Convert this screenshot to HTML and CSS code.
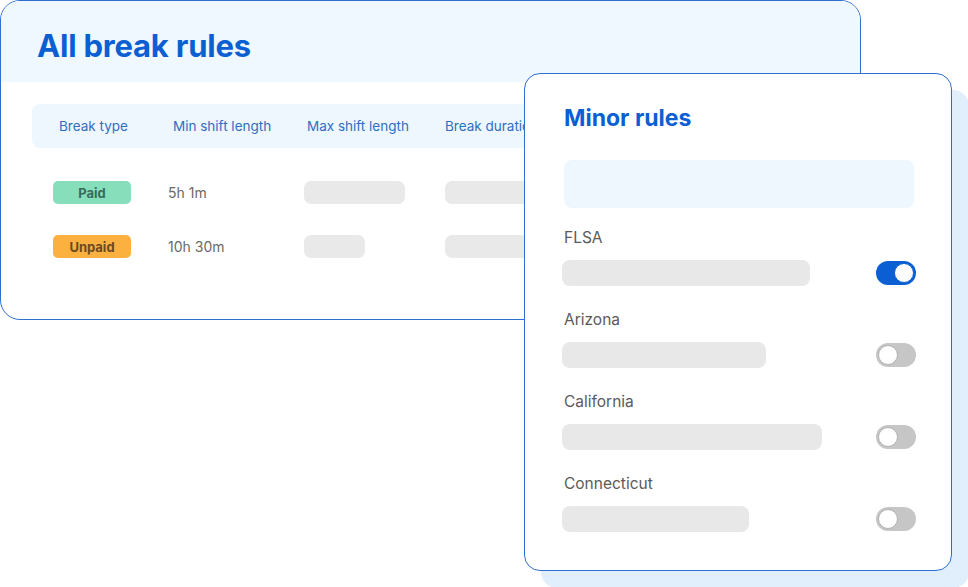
FILE: index.html
```html
<!DOCTYPE html>
<html lang="en">
<head>
<meta charset="utf-8">
<title>Break rules</title>
<link rel="stylesheet" href="styles.css">
</head>
<body>
<div class="stage">
  <section class="rules-card">
    <header class="rules-head">
      <h1 class="rules-title">All break rules</h1>
    </header>
    <div class="table">
      <div class="thead">
        <span>Break type</span>
        <span>Min shift length</span>
        <span>Max shift length</span>
        <span>Break duration</span>
      </div>
      <div class="trow">
        <span class="badge badge-paid">Paid</span>
        <span class="cell-text">5h 1m</span>
        <span class="ph" style="width:101px"></span>
        <span class="ph" style="width:120px"></span>
      </div>
      <div class="trow">
        <span class="badge badge-unpaid">Unpaid</span>
        <span class="cell-text">10h 30m</span>
        <span class="ph" style="width:61px"></span>
        <span class="ph" style="width:120px"></span>
      </div>
    </div>
  </section>

  <section class="minor-card">
    <h2 class="minor-title">Minor rules</h2>
    <div class="search"></div>
    <ul class="rule-list">
      <li class="rule">
        <span class="rule-label">FLSA</span>
        <div class="rule-line">
          <span class="bar" style="width:248px"></span>
          <span class="toggle on"><span class="knob"></span></span>
        </div>
      </li>
      <li class="rule">
        <span class="rule-label">Arizona</span>
        <div class="rule-line">
          <span class="bar" style="width:204px"></span>
          <span class="toggle"><span class="knob"></span></span>
        </div>
      </li>
      <li class="rule">
        <span class="rule-label">California</span>
        <div class="rule-line">
          <span class="bar" style="width:260px"></span>
          <span class="toggle"><span class="knob"></span></span>
        </div>
      </li>
      <li class="rule">
        <span class="rule-label">Connecticut</span>
        <div class="rule-line">
          <span class="bar" style="width:187px"></span>
          <span class="toggle"><span class="knob"></span></span>
        </div>
      </li>
    </ul>
  </section>
</div>
</body>
</html>
```

FILE: styles.css
```css
* { box-sizing: border-box; }
html, body { margin: 0; padding: 0; }
body {
  width: 968px;
  height: 587px;
  overflow: hidden;
  background: #ffffff;
  font-family: Inter, "Noto Sans", sans-serif;
}
.stage {
  position: relative;
  width: 968px;
  height: 587px;
}

/* back card */
.rules-card {
  width: 861px;
  height: 320px;
  border: 1px solid #2e6fcf;
  border-radius: 20px;
  overflow: hidden;
  background: #ffffff;
}
.rules-head {
  height: 81px;
  background: #eff7ff;
  display: flex;
  align-items: center;
  padding: 7px 0 0 36px;
}
.rules-title {
  margin: 0;
  font-size: 31px;
  font-weight: 700;
  color: #0b5fd3;
  letter-spacing: -0.2px;
}
.table {
  margin: 22px 0 0 31px;
}
.thead {
  height: 44px;
  background: #eef6fe;
  border-radius: 8px;
  display: grid;
  grid-template-columns: 114px 134px 138px 1fr;
  align-items: center;
  padding-left: 27px;
  font-size: 13.5px;
  color: #2f6fc2;
  white-space: nowrap;
}
.trow {
  display: grid;
  grid-template-columns: 115px 136px 141px 1fr;
  align-items: center;
  padding-left: 21px;
  height: 23px;
  margin-top: 33px;
}
.trow + .trow { margin-top: 31px; }
.badge {
  width: 78px;
  height: 23px;
  border-radius: 5px;
  display: flex;
  align-items: center;
  justify-content: center;
  font-size: 13px;
  font-weight: 700;
}
.badge-paid { background: #86dfba; color: #3a6b58; }
.badge-unpaid { background: #fbb040; color: #6b4a1c; }
.cell-text {
  font-size: 14px;
  color: #6a6a6a;
}
.ph {
  display: block;
  height: 23px;
  border-radius: 7px;
  background: #e9e9e9;
}

/* front card */
.minor-card {
  position: absolute;
  left: 524px;
  top: 73px;
  width: 428px;
  height: 498px;
  background: #ffffff;
  border: 1px solid #2e6fcf;
  border-radius: 16px;
  box-shadow: 17px 17px 0 0 #e1eefc;
  padding: 30px 35px 0 39px;
}
.minor-title {
  margin: 0;
  font-size: 23px;
  line-height: 28px;
  font-weight: 700;
  color: #0b5fd3;
}
.search {
  margin-top: 28px;
  height: 48px;
  width: 350px;
  border-radius: 8px;
  background: #eff7fe;
}
.rule-list {
  list-style: none;
  margin: 20px 0 0;
  padding: 0;
}
.rule { margin-bottom: 24px; }
.rule-label {
  display: block;
  font-size: 15.5px;
  line-height: 20px;
  color: #5a5a5a;
}
.rule-line {
  margin-top: 12px;
  display: flex;
  align-items: center;
  justify-content: space-between;
  margin-left: -2px;
}
.bar {
  display: block;
  height: 26px;
  border-radius: 8px;
  background: #e8e8e8;
}
.toggle {
  position: relative;
  width: 40px;
  height: 24px;
  border-radius: 12px;
  background: #c6c6c6;
}
.knob {
  position: absolute;
  top: 2px;
  left: 2px;
  width: 20px;
  height: 20px;
  border-radius: 50%;
  background: #ffffff;
  border: 1.5px solid #b0b0b0;
}
.toggle.on { background: #0b5fd3; }
.toggle.on .knob {
  left: 18px;
  border-color: #0b5fd3;
}
```
